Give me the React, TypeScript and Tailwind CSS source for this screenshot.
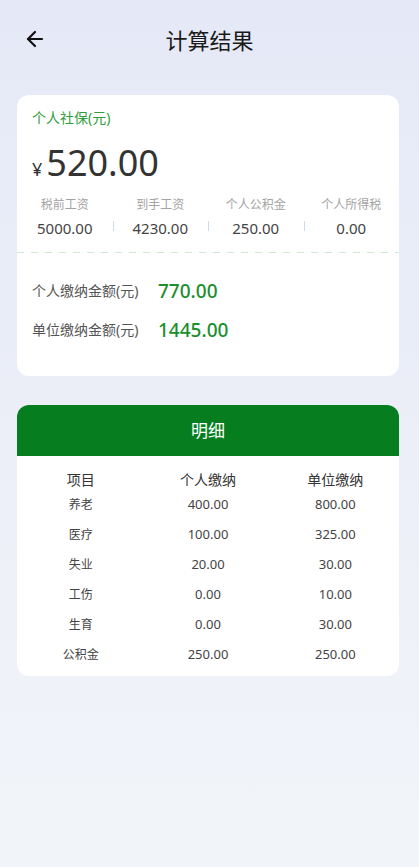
import { ArrowLeft } from 'lucide-react';

const stats = [
  { label: '税前工资', value: '5000.00' },
  { label: '到手工资', value: '4230.00' },
  { label: '个人公积金', value: '250.00' },
  { label: '个人所得税', value: '0.00' },
];

const rows = [
  { name: '养老', personal: '400.00', company: '800.00' },
  { name: '医疗', personal: '100.00', company: '325.00' },
  { name: '失业', personal: '20.00', company: '30.00' },
  { name: '工伤', personal: '0.00', company: '10.00' },
  { name: '生育', personal: '0.00', company: '30.00' },
  { name: '公积金', personal: '250.00', company: '250.00' },
];

export default function App() {
  return (
    <main
      className="min-h-[867px] bg-gradient-to-b from-[#e5e9f7] via-[#eceff8] to-[#f1f4f8] pb-10"
      style={{ fontFamily: '"Noto Sans", "Noto Sans CJK SC", sans-serif' }}
    >
      {/* 顶部标题 */}
      <div className="relative h-[80px] flex items-center justify-center">
        <button className="absolute left-[23px] top-[27px] text-[#111]">
          <ArrowLeft size={24} strokeWidth={2.2} />
        </button>
        <h1 className="text-[22px] text-[#1a1a1a]">计算结果</h1>
      </div>

      {/* 个人社保卡片 */}
      <div className="ml-[17px] w-[382px] mt-[15px] bg-white rounded-[12px] pt-[13px] pb-[34px]">
        <div className="px-[15px]">
          <p className="text-[14px] leading-[20px] text-[#2f9e3c]">个人社保(元)</p>
          <div className="mt-[13px] flex items-baseline gap-[4px] text-[#333]">
            <span className="text-[18px]">¥</span>
            <span className="text-[36px] leading-[44px]">520.00</span>
          </div>
        </div>

        <div className="mt-[12px] grid grid-cols-4">
          {stats.map((s, i) => (
            <div key={s.label} className="relative flex flex-col items-center">
              <span className="text-[12px] leading-[16px] text-[#a3a3a3]">{s.label}</span>
              <span className="mt-[5px] text-[15px] leading-[20px] text-[#444]">{s.value}</span>
              {i > 0 && (
                <span className="absolute left-0 top-[24px] h-[10px] w-px bg-[#cdd9ee]" />
              )}
            </div>
          ))}
        </div>

        <div className="mt-[14px] h-px bg-[repeating-linear-gradient(90deg,#cfe9d2_0_7px,transparent_7px_14px)]" />

        <div className="px-[15px] mt-[26px] flex items-center">
          <span className="w-[126px] text-[14px] leading-[24px] text-[#555]">个人缴纳金额(元)</span>
          <span className="text-[19px] leading-[24px] font-medium text-[#1b8f2c]">770.00</span>
        </div>
        <div className="px-[15px] mt-[15px] flex items-center">
          <span className="w-[126px] text-[14px] leading-[24px] text-[#555]">单位缴纳金额(元)</span>
          <span className="text-[19px] leading-[24px] font-medium text-[#1b8f2c]">1445.00</span>
        </div>
      </div>

      {/* 明细 */}
      <div className="ml-[17px] w-[382px] mt-[29px] bg-white rounded-[12px] overflow-hidden pb-[6px]">
        <div className="h-[51px] bg-[#067e1f] flex items-center justify-center text-white text-[17px]">
          明细
        </div>
        <div className="grid grid-cols-3 pt-[14px] text-[14px] leading-[20px] text-[#333] text-center">
          <span>项目</span>
          <span>个人缴纳</span>
          <span>单位缴纳</span>
        </div>
        {rows.map((r) => (
          <div key={r.name} className="grid grid-cols-3 h-[30px] items-center text-center text-[#444]">
            <span className="text-[12px]">{r.name}</span>
            <span className="text-[13px]">{r.personal}</span>
            <span className="text-[13px]">{r.company}</span>
          </div>
        ))}
      </div>
    </main>
  );
}
